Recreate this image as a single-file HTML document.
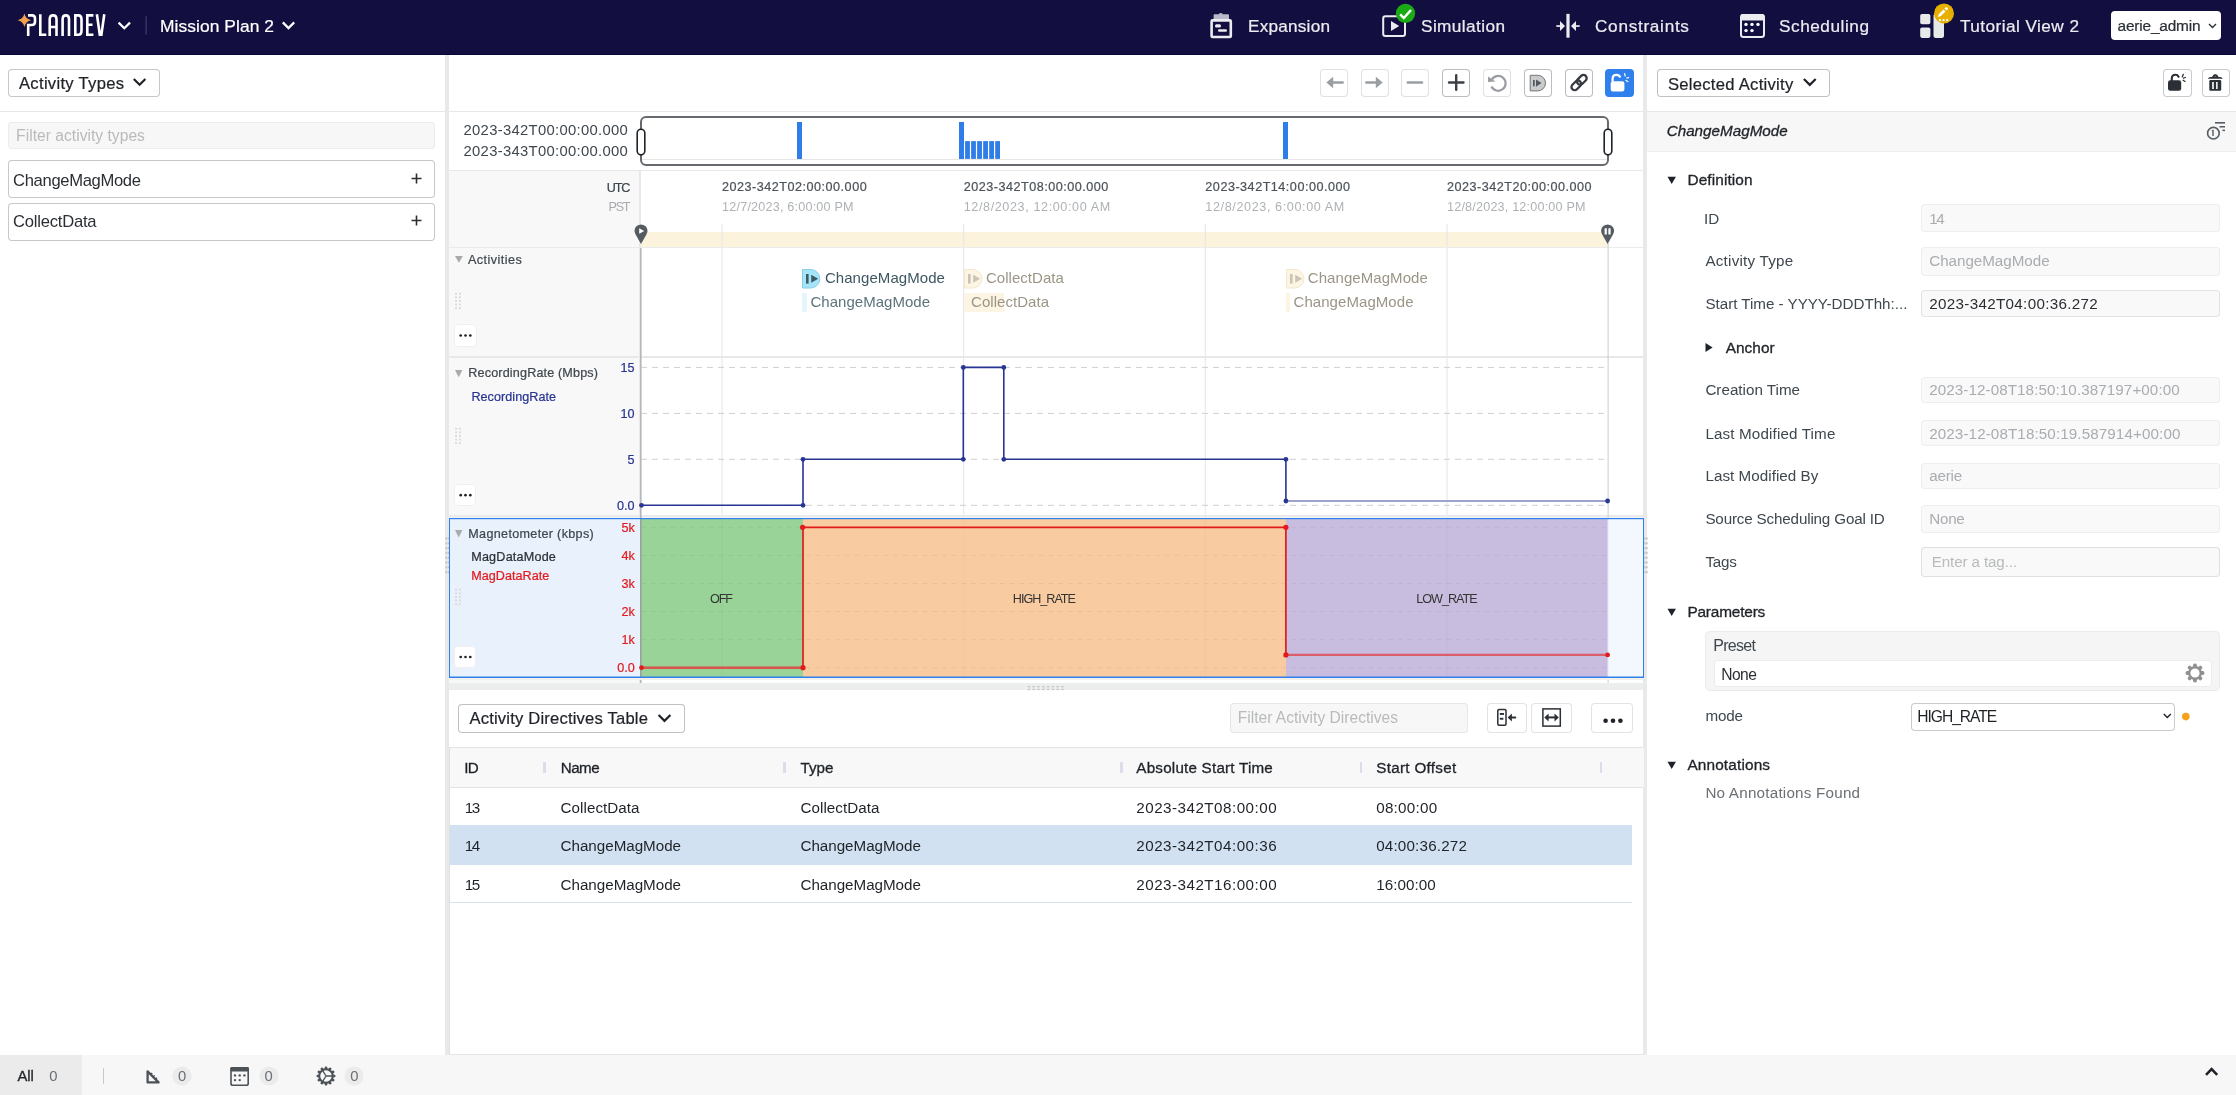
<!DOCTYPE html><html><head><meta charset="utf-8"><style>
html,body{margin:0;padding:0;}
body{width:2236px;height:1095px;overflow:hidden;position:relative;background:#fff;font-family:"Liberation Sans",sans-serif;}
.t{position:absolute;white-space:pre;}
.r{position:absolute;box-sizing:border-box;}
.s{position:absolute;overflow:visible;}
</style></head><body>
<div class="r" style="left:0px;top:0px;width:2236px;height:55px;background:#120f40;"></div>
<div class="r" style="left:0px;top:54px;width:2236px;height:1px;background:#07053a;"></div>
<svg class="s" style="left:0px;top:0px;" width="140" height="55" viewBox="0 0 140 55"><path d="M24.4 13.6 Q25.6 19.2 31.2 20.3 Q25.6 21.4 24.4 27 Q23.2 21.4 17.6 20.3 Q23.2 19.2 24.4 13.6Z" fill="#f2a24e"/><g fill="none" stroke="#fff" stroke-width="2.6" stroke-linecap="butt"><path d="M28.2 36 V25 H32 Q35 25 35 21.5 V18.6 Q35 15.4 32 15.4 H28"/><path d="M40.3 14.2 V34.7 H46.3"/><path d="M49.7 36 V19.5 Q49.7 15.4 53.1 15.4 Q56.5 15.4 56.5 19.5 V36 M49.7 27 H56.5"/><path d="M62.6 36 V19.5 Q62.6 15.4 65.8 15.4 Q69 15.4 69 19.5 V36"/><path d="M75.3 15.4 V34.7 H78.3 Q81.5 34.7 81.5 30.5 V19.6 Q81.5 15.4 78.3 15.4 Z"/><path d="M93.4 15.4 H87.3 V34.7 H93.4 M87.3 24.7 H92.5"/><path d="M96.9 14.2 L99.8 34.7 H101.4 L104.3 14.2"/></g><path d="M118.6 22.6 L124.3 28.3 L130 22.6" fill="none" stroke="#fff" stroke-width="2.2"/><rect x="145.6" y="16.3" width="1" height="18.4" fill="#4a4874"/></svg>
<svg class="s" style="left:280px;top:18px;" width="18" height="16" viewBox="0 0 18 16"><path d="M2.8 4.4 L8.5 10.1 L14.2 4.4" fill="none" stroke="#fff" stroke-width="2.2"/></svg>
<svg class="s" style="left:1205px;top:8px;" width="32" height="36" viewBox="0 0 32 36"><rect x="6.6" y="12.4" width="19.2" height="16.6" rx="1" fill="none" stroke="#ececf0" stroke-width="2.6"/><path d="M8.6 11 V7.2 Q8.6 6.2 9.6 6.2 H13.6 Q15.8 3.6 18 6.2 H23 Q24 6.2 24 7.2 V11 Z" fill="#b9b7c9"/><rect x="10" y="16.3" width="6" height="3.1" rx="1.5" fill="#ececf0"/><rect x="13" y="21.3" width="9" height="2.5" rx="1.2" fill="#ececf0"/></svg>
<svg class="s" style="left:1375px;top:0px;" width="45" height="45" viewBox="0 0 45 45"><rect x="8.2" y="16.3" width="21.8" height="19.6" rx="2.2" fill="none" stroke="#ececf0" stroke-width="2"/><path d="M16 21 L24.2 26 L16 31 Z" fill="#ececf0"/><circle cx="30.5" cy="13.4" r="9.6" fill="#1aaa14"/><path d="M25.2 14.3 L28.8 18 L36 10" fill="none" stroke="#fff" stroke-width="2.5"/></svg>
<svg class="s" style="left:1550px;top:8px;" width="36" height="36" viewBox="0 0 36 36"><rect x="16.4" y="5.9" width="3.2" height="23.8" fill="#ececf0"/><path d="M10 12.9 L15 18 L10 23.1 Z M26 12.9 L21 18 L26 23.1 Z" fill="#ececf0"/><rect x="6.3" y="17.2" width="4" height="1.7" fill="#ececf0"/><rect x="25.7" y="17.2" width="4" height="1.7" fill="#ececf0"/></svg>
<svg class="s" style="left:1735px;top:8px;" width="36" height="36" viewBox="0 0 36 36"><rect x="6" y="6.9" width="23" height="22.2" rx="2.5" fill="none" stroke="#ececf0" stroke-width="2"/><rect x="5.5" y="6" width="24" height="6.4" rx="2" fill="#ececf0"/><g fill="#fff"><circle cx="11" cy="16.4" r="1.7"/><circle cx="17" cy="16.4" r="1.7"/><circle cx="23" cy="16.4" r="1.7"/><circle cx="11" cy="22.6" r="1.7"/><circle cx="17" cy="22.6" r="1.7"/></g></svg>
<svg class="s" style="left:1910px;top:0px;" width="50" height="45" viewBox="0 0 50 45"><rect x="10.2" y="13.9" width="10.2" height="10.3" rx="1.8" fill="#e8eaea"/><rect x="10.2" y="27.4" width="10.2" height="10.5" rx="1.8" fill="#e8eaea"/><rect x="23.5" y="13.9" width="10.5" height="24" rx="1.8" fill="#e8eaea"/><circle cx="34" cy="13.4" r="10" fill="#e5b000"/><path d="M27.8 17.2 L28.9 14.1 L33.5 9.5 L35.5 11.5 L30.9 16.1 Z" fill="#fff"/><path d="M34.4 8.6 L35.6 7.4 Q36.4 6.6 37.2 7.4 L37.6 7.8 Q38.4 8.6 37.6 9.4 L36.4 10.6 Z" fill="#fff"/><g fill="#fff"><circle cx="30" cy="20.1" r="1.2"/><circle cx="33.6" cy="20.1" r="1.2"/><circle cx="37.2" cy="20.1" r="1.2"/></g></svg>
<div class="r" style="left:2111px;top:11px;width:110px;height:29px;background:#ffffff;border-radius:4px;"></div>
<svg class="s" style="left:2205px;top:20px;" width="14" height="12" viewBox="0 0 14 12"><path d="M4 4 L7.5 7.5 L11 4" fill="none" stroke="#2b2f36" stroke-width="1.4"/></svg>
<div class="r" style="left:445px;top:55px;width:4px;height:1000px;background:#e8eaea;"></div>
<div class="r" style="left:1643px;top:55px;width:4px;height:1000px;background:#e8eaea;"></div>
<svg class="s" style="left:0px;top:0px;" width="2236" height="1095" viewBox="0 0 2236 1095"><rect x="445.4" y="537.4" width="1.5" height="2.2" fill="#c2c4c6"/><rect x="447.6" y="537.4" width="1.5" height="2.2" fill="#c2c4c6"/><rect x="1644.2" y="537.4" width="1.5" height="2.2" fill="#c2c4c6"/><rect x="1646.2" y="537.4" width="1.5" height="2.2" fill="#c2c4c6"/><rect x="445.4" y="542.2" width="1.5" height="2.2" fill="#c2c4c6"/><rect x="447.6" y="542.2" width="1.5" height="2.2" fill="#c2c4c6"/><rect x="1644.2" y="542.2" width="1.5" height="2.2" fill="#c2c4c6"/><rect x="1646.2" y="542.2" width="1.5" height="2.2" fill="#c2c4c6"/><rect x="445.4" y="547.0" width="1.5" height="2.2" fill="#c2c4c6"/><rect x="447.6" y="547.0" width="1.5" height="2.2" fill="#c2c4c6"/><rect x="1644.2" y="547.0" width="1.5" height="2.2" fill="#c2c4c6"/><rect x="1646.2" y="547.0" width="1.5" height="2.2" fill="#c2c4c6"/><rect x="445.4" y="551.8" width="1.5" height="2.2" fill="#c2c4c6"/><rect x="447.6" y="551.8" width="1.5" height="2.2" fill="#c2c4c6"/><rect x="1644.2" y="551.8" width="1.5" height="2.2" fill="#c2c4c6"/><rect x="1646.2" y="551.8" width="1.5" height="2.2" fill="#c2c4c6"/><rect x="445.4" y="556.6" width="1.5" height="2.2" fill="#c2c4c6"/><rect x="447.6" y="556.6" width="1.5" height="2.2" fill="#c2c4c6"/><rect x="1644.2" y="556.6" width="1.5" height="2.2" fill="#c2c4c6"/><rect x="1646.2" y="556.6" width="1.5" height="2.2" fill="#c2c4c6"/><rect x="445.4" y="561.4" width="1.5" height="2.2" fill="#c2c4c6"/><rect x="447.6" y="561.4" width="1.5" height="2.2" fill="#c2c4c6"/><rect x="1644.2" y="561.4" width="1.5" height="2.2" fill="#c2c4c6"/><rect x="1646.2" y="561.4" width="1.5" height="2.2" fill="#c2c4c6"/><rect x="445.4" y="566.2" width="1.5" height="2.2" fill="#c2c4c6"/><rect x="447.6" y="566.2" width="1.5" height="2.2" fill="#c2c4c6"/><rect x="1644.2" y="566.2" width="1.5" height="2.2" fill="#c2c4c6"/><rect x="1646.2" y="566.2" width="1.5" height="2.2" fill="#c2c4c6"/><rect x="445.4" y="571.0" width="1.5" height="2.2" fill="#c2c4c6"/><rect x="447.6" y="571.0" width="1.5" height="2.2" fill="#c2c4c6"/><rect x="1644.2" y="571.0" width="1.5" height="2.2" fill="#c2c4c6"/><rect x="1646.2" y="571.0" width="1.5" height="2.2" fill="#c2c4c6"/></svg>
<div class="r" style="left:8px;top:69px;width:152px;height:28px;background:#fff;box-shadow:inset 0 0 0 1px #c5c7c9;border-radius:4px;"></div>
<svg class="s" style="left:130px;top:74px;" width="20" height="16" viewBox="0 0 20 16"><path d="M3.8 5 L9.6 10.8 L15.4 5" fill="none" stroke="#1f2328" stroke-width="2.2"/></svg>
<div class="r" style="left:0px;top:111px;width:445px;height:1px;background:#e6e6e6;"></div>
<div class="r" style="left:8px;top:122px;width:427px;height:27px;background:#f7f7f7;box-shadow:inset 0 0 0 1px #ececec;border-radius:4px;"></div>
<div class="r" style="left:8px;top:160px;width:427px;height:38px;background:#fff;box-shadow:inset 0 0 0 1px #c8c8c8;border-radius:4px;"></div>
<svg class="s" style="left:405px;top:168px;" width="22" height="22" viewBox="0 0 22 22"><path d="M11.5 5.5 V15.5 M6.5 10.5 H16.5" stroke="#2b2f33" stroke-width="1.6"/></svg>
<div class="r" style="left:8px;top:202.5px;width:427px;height:38px;background:#fff;box-shadow:inset 0 0 0 1px #c8c8c8;border-radius:4px;"></div>
<svg class="s" style="left:405px;top:210px;" width="22" height="22" viewBox="0 0 22 22"><path d="M11.5 5.5 V15.5 M6.5 10.5 H16.5" stroke="#2b2f33" stroke-width="1.6"/></svg>
<div class="r" style="left:1320px;top:69px;width:28px;height:28px;background:#fff;box-shadow:inset 0 0 0 1px #dfe1e3;border-radius:4px;"></div>
<div class="r" style="left:1361px;top:69px;width:28px;height:28px;background:#fff;box-shadow:inset 0 0 0 1px #dfe1e3;border-radius:4px;"></div>
<div class="r" style="left:1401px;top:69px;width:28px;height:28px;background:#fff;box-shadow:inset 0 0 0 1px #dfe1e3;border-radius:4px;"></div>
<div class="r" style="left:1442px;top:69px;width:28px;height:28px;background:#fff;box-shadow:inset 0 0 0 1px #b9bdc1;border-radius:4px;"></div>
<div class="r" style="left:1483px;top:69px;width:28px;height:28px;background:#fff;box-shadow:inset 0 0 0 1px #dfe1e3;border-radius:4px;"></div>
<div class="r" style="left:1524px;top:69px;width:28px;height:28px;background:#fff;box-shadow:inset 0 0 0 1px #b9bdc1;border-radius:4px;"></div>
<div class="r" style="left:1565px;top:69px;width:28px;height:28px;background:#fff;box-shadow:inset 0 0 0 1px #b9bdc1;border-radius:4px;"></div>
<div class="r" style="left:1605px;top:69px;width:29px;height:28px;background:#2f80ed;border-radius:4px;"></div>
<svg class="s" style="left:1320px;top:69px;" width="28" height="28" viewBox="0 0 28 28"><path d="M6.3 13.5 L13.2 7.8 V19.2 Z" fill="#9a9ea3"/><path d="M12 13.5 H22.7" stroke="#9a9ea3" stroke-width="2.4" stroke-linecap="round"/></svg>
<svg class="s" style="left:1361px;top:69px;" width="28" height="28" viewBox="0 0 28 28"><path d="M21.7 13.5 L14.8 7.8 V19.2 Z" fill="#9a9ea3"/><path d="M16 13.5 H5.3" stroke="#9a9ea3" stroke-width="2.4" stroke-linecap="round"/></svg>
<svg class="s" style="left:1401px;top:69px;" width="28" height="28" viewBox="0 0 28 28"><path d="M6.8 13.5 H21" stroke="#9a9ea3" stroke-width="2.4" stroke-linecap="round"/></svg>
<svg class="s" style="left:1442px;top:69px;" width="28" height="28" viewBox="0 0 28 28"><path d="M7 13.5 H21.5 M14.2 6.3 V20.8" stroke="#3b4047" stroke-width="2.4" stroke-linecap="round"/></svg>
<svg class="s" style="left:1483px;top:69px;" width="28" height="28" viewBox="0 0 28 28"><path d="M8.6 11 A7.4 7.4 0 1 1 8.5 17.5" fill="none" stroke="#9a9ea3" stroke-width="2.2"/><path d="M5 7.5 L12.5 12.5 L5 13 Z" fill="#9a9ea3"/></svg>
<svg class="s" style="left:1524px;top:69px;" width="28" height="28" viewBox="0 0 28 28"><path d="M6.2 6.3 H13.7 A7.8 7.8 0 0 1 13.7 21.9 H6.2 Z" fill="#cbcbcb" stroke="#70767b" stroke-width="1"/><rect x="9" y="11" width="1.7" height="6.3" fill="#505860"/><path d="M12 10.5 L17.5 14.1 L12 17.7 Z" fill="#505860"/></svg>
<svg class="s" style="left:1565px;top:69px;" width="28" height="28" viewBox="0 0 28 28"><g transform="rotate(-45 14 13.5)" fill="none" stroke="#353b41" stroke-width="2.3"><rect x="4.6" y="10.4" width="11" height="6.4" rx="3.2"/><rect x="12.4" y="10.4" width="11" height="6.4" rx="3.2"/></g></svg>
<svg class="s" style="left:1605px;top:69px;" width="29" height="28" viewBox="0 0 29 28"><rect x="5.7" y="12.2" width="13.7" height="10.3" rx="2.2" fill="#fff"/><path d="M7.6 12.8 V9.8 Q7.6 5.8 11.4 5.8 Q14.6 5.8 15.2 8.6" fill="none" stroke="#fff" stroke-width="2.2"/><g stroke="#fff" stroke-width="1.2" stroke-linecap="round"><path d="M19.6 4.6 L20.2 7"/><path d="M21.6 9 L23.7 8.6"/><path d="M21 11.4 L22.8 12.6"/></g></svg>
<div class="r" style="left:449px;top:111px;width:1194px;height:1px;background:#e8e8e8;"></div>
<svg class="s" style="left:0px;top:0px;" width="2236" height="200" viewBox="0 0 2236 200"><rect x="641" y="117" width="967" height="48" rx="5" fill="#fff" stroke="#666a6e" stroke-width="2"/><rect x="642" y="159" width="965" height="1" fill="#e6e6e6"/><rect x="797" y="122" width="5" height="37" fill="#2f7de8"/><rect x="959" y="122" width="5" height="37" fill="#2f7de8"/><rect x="1283" y="122" width="5" height="37" fill="#2f7de8"/><rect x="965.10" y="141.1" width="4.8" height="17.8" fill="#2f7de8"/><rect x="971.12" y="141.1" width="4.8" height="17.8" fill="#2f7de8"/><rect x="977.14" y="141.1" width="4.8" height="17.8" fill="#2f7de8"/><rect x="983.16" y="141.1" width="4.8" height="17.8" fill="#2f7de8"/><rect x="989.18" y="141.1" width="4.8" height="17.8" fill="#2f7de8"/><rect x="995.20" y="141.1" width="4.8" height="17.8" fill="#2f7de8"/><rect x="637.2" y="129.3" width="7.6" height="25.6" rx="3.8" fill="#fff" stroke="#1f2328" stroke-width="1.6"/><rect x="1604.2" y="129.3" width="7.6" height="25.6" rx="3.8" fill="#fff" stroke="#1f2328" stroke-width="1.6"/></svg>
<div class="r" style="left:449px;top:170px;width:1194px;height:1px;background:#e8e8e8;"></div>
<div class="r" style="left:449px;top:171px;width:190px;height:513px;background:#f8f8f8;"></div>
<svg class="s" style="left:0px;top:0px;" width="2236" height="700" viewBox="0 0 2236 700"><rect x="641" y="232" width="966.6" height="15.6" fill="#fcf3dd"/><rect x="721.5" y="224" width="1" height="453" fill="#e3e5e8"/><rect x="963.2" y="224" width="1" height="453" fill="#e3e5e8"/><rect x="1204.8" y="224" width="1" height="453" fill="#e3e5e8"/><rect x="1446.5" y="224" width="1" height="453" fill="#e3e5e8"/><rect x="449" y="247" width="1194" height="1" fill="#ebebeb"/><rect x="449" y="356" width="1194" height="2" fill="#e8e8e8"/><rect x="449" y="515" width="1194" height="2.5" fill="#ebebeb"/><rect x="639" y="171" width="2" height="513" fill="#e6e8ea"/><rect x="640" y="248" width="1.6" height="436" fill="#b4b8bc"/><rect x="1607.6" y="243" width="1" height="441" fill="#c8ccd0"/></svg>
<svg class="s" style="left:630px;top:220px;" width="22" height="26" viewBox="0 0 22 26"><path d="M11 24 L5.6 14.5 A6.5 6.5 0 1 1 16.4 14.5 Z" fill="#545b61"/><path d="M9.2 8.2 L14.2 11 L9.2 13.8 Z" fill="#fff"/></svg>
<svg class="s" style="left:1597px;top:220px;" width="22" height="26" viewBox="0 0 22 26"><path d="M10.6 24 L5.2 14.5 A6.5 6.5 0 1 1 16 14.5 Z" fill="#545b61"/><rect x="7.6" y="8.3" width="2.2" height="6.2" fill="#fff"/><rect x="11.4" y="8.3" width="2.2" height="6.2" fill="#fff"/></svg>
<div class="r" style="left:449px;top:248px;width:190px;height:108px;background:#f8f8f8;"></div>
<svg class="s" style="left:454.6px;top:256.2px;" width="7.9" height="6.8" viewBox="0 0 7.9 6.8"><path d="M0 0 H7.9 L3.95 6.8 Z" fill="#a8aaad"/></svg>
<svg class="s" style="left:0px;top:0px;" width="2236" height="1095" viewBox="0 0 2236 1095"><rect x="455.1" y="292.8" width="1.9" height="1.9" fill="#dadada"/><rect x="459.0" y="292.8" width="1.9" height="1.9" fill="#dadada"/><rect x="455.1" y="296.4" width="1.9" height="1.9" fill="#dadada"/><rect x="459.0" y="296.4" width="1.9" height="1.9" fill="#dadada"/><rect x="455.1" y="300.0" width="1.9" height="1.9" fill="#dadada"/><rect x="459.0" y="300.0" width="1.9" height="1.9" fill="#dadada"/><rect x="455.1" y="303.6" width="1.9" height="1.9" fill="#dadada"/><rect x="459.0" y="303.6" width="1.9" height="1.9" fill="#dadada"/><rect x="455.1" y="307.2" width="1.9" height="1.9" fill="#dadada"/><rect x="459.0" y="307.2" width="1.9" height="1.9" fill="#dadada"/></svg>
<div class="r" style="left:453.5px;top:324.3px;width:23px;height:23px;background:#fff;box-shadow:inset 0 0 0 1px #efefef;border-radius:5px;"></div>
<svg class="s" style="left:453.5px;top:324.3px;" width="23" height="23" viewBox="0 0 23 23"><circle cx="6.7" cy="11.5" r="1.35" fill="#1f2328"/><circle cx="11.5" cy="11.5" r="1.35" fill="#1f2328"/><circle cx="16.3" cy="11.5" r="1.35" fill="#1f2328"/></svg>
<svg class="s" style="left:802.4px;top:269.2px;" width="20" height="20" viewBox="0 0 20 20"><path d="M0.5 0.5 H9.5 A9.3 9.3 0 0 1 9.5 19 H0.5 Z" fill="#a6e5f8" stroke="#86d0e8" stroke-width="1"/><rect x="4" y="5" width="2.6" height="9.6" fill="#3d5a66"/><path d="M9.2 5.8 L16.2 9.8 L9.2 13.8 Z" fill="#3d5a66"/></svg>
<div class="r" style="left:802.4px;top:293.4px;width:4.8px;height:18.4px;background:#e4f6fc;"></div>
<svg class="s" style="left:963.6px;top:269.2px;" width="20" height="20" viewBox="0 0 20 20"><path d="M0.5 0.5 H9.5 A9.3 9.3 0 0 1 9.5 19 H0.5 Z" fill="#fdf5e3" stroke="#f3e8cd" stroke-width="1"/><rect x="4" y="5" width="2.6" height="9.6" fill="#c9c4b6"/><path d="M9.2 5.8 L16.2 9.8 L9.2 13.8 Z" fill="#c9c4b6"/></svg>
<div class="r" style="left:963.6px;top:293.1px;width:40.2px;height:18.6px;background:#fdf5e3;"></div>
<svg class="s" style="left:1285.5px;top:269.2px;" width="20" height="20" viewBox="0 0 20 20"><path d="M0.5 0.5 H9.5 A9.3 9.3 0 0 1 9.5 19 H0.5 Z" fill="#fdf5e3" stroke="#f3e8cd" stroke-width="1"/><rect x="4" y="5" width="2.6" height="9.6" fill="#c9c4b6"/><path d="M9.2 5.8 L16.2 9.8 L9.2 13.8 Z" fill="#c9c4b6"/></svg>
<div class="r" style="left:1285.5px;top:293.1px;width:4.5px;height:18.6px;background:#fdf5e3;"></div>
<div class="r" style="left:449px;top:358px;width:190px;height:157px;background:#f8f8f8;"></div>
<svg class="s" style="left:455px;top:369.9px;" width="7.4" height="7.3" viewBox="0 0 7.4 7.3"><path d="M0 0 H7.4 L3.7 7.3 Z" fill="#a8aaad"/></svg>
<svg class="s" style="left:0px;top:0px;" width="2236" height="1095" viewBox="0 0 2236 1095"><rect x="455.1" y="427.8" width="1.9" height="1.9" fill="#dadada"/><rect x="459.0" y="427.8" width="1.9" height="1.9" fill="#dadada"/><rect x="455.1" y="431.4" width="1.9" height="1.9" fill="#dadada"/><rect x="459.0" y="431.4" width="1.9" height="1.9" fill="#dadada"/><rect x="455.1" y="435.0" width="1.9" height="1.9" fill="#dadada"/><rect x="459.0" y="435.0" width="1.9" height="1.9" fill="#dadada"/><rect x="455.1" y="438.6" width="1.9" height="1.9" fill="#dadada"/><rect x="459.0" y="438.6" width="1.9" height="1.9" fill="#dadada"/><rect x="455.1" y="442.2" width="1.9" height="1.9" fill="#dadada"/><rect x="459.0" y="442.2" width="1.9" height="1.9" fill="#dadada"/></svg>
<div class="r" style="left:453.5px;top:483.5px;width:22.5px;height:22.5px;background:#fff;box-shadow:inset 0 0 0 1px #efefef;border-radius:5px;"></div>
<svg class="s" style="left:453.5px;top:483.5px;" width="22.5" height="22.5" viewBox="0 0 22.5 22.5"><circle cx="6.7" cy="11.2" r="1.35" fill="#1f2328"/><circle cx="11.5" cy="11.2" r="1.35" fill="#1f2328"/><circle cx="16.3" cy="11.2" r="1.35" fill="#1f2328"/></svg>
<svg class="s" style="left:0px;top:0px;" width="2236" height="700" viewBox="0 0 2236 700"><line x1="641" y1="367.4" x2="1607.6" y2="367.4" stroke="#cfcfcf" stroke-width="1" stroke-dasharray="6 5"/><line x1="641" y1="413.4" x2="1607.6" y2="413.4" stroke="#cfcfcf" stroke-width="1" stroke-dasharray="6 5"/><line x1="641" y1="459.3" x2="1607.6" y2="459.3" stroke="#cfcfcf" stroke-width="1" stroke-dasharray="6 5"/><line x1="641" y1="505.3" x2="1607.6" y2="505.3" stroke="#cfcfcf" stroke-width="1" stroke-dasharray="6 5"/><path d="M641.0 505.3 L803.0 505.3 L803.0 459.3 L963.3 459.3 L963.3 367.4 L1003.8 367.4 L1003.8 459.3 L1285.9 459.3" fill="none" stroke="#283593" stroke-width="1.6"/><path d="M1285.9 459.3 L1285.9 501" fill="none" stroke="#283593" stroke-width="1.6"/><path d="M1285.9 501 L1607.6 501" fill="none" stroke="#9ea3cc" stroke-width="2"/><circle cx="803.0" cy="505.3" r="2.4" fill="#283593"/><circle cx="803.0" cy="459.3" r="2.4" fill="#283593"/><circle cx="963.3" cy="459.3" r="2.4" fill="#283593"/><circle cx="963.3" cy="367.4" r="2.4" fill="#283593"/><circle cx="1003.8" cy="367.4" r="2.4" fill="#283593"/><circle cx="1003.8" cy="459.3" r="2.4" fill="#283593"/><circle cx="1285.9" cy="459.3" r="2.4" fill="#283593"/><circle cx="1285.9" cy="501.0" r="2.4" fill="#283593"/><circle cx="641.5" cy="505.3" r="2.4" fill="#283593"/><circle cx="1607.6" cy="501" r="2.4" fill="#283593"/></svg>
<div class="r" style="left:449px;top:518px;width:1194.5px;height:160px;background:#e9f1fc;box-shadow:inset 0 0 0 1px #2f80ed;"></div>
<div class="r" style="left:1608.6px;top:519px;width:34px;height:158px;background:#f3f7fe;"></div>
<svg class="s" style="left:0px;top:0px;" width="2236" height="700" viewBox="0 0 2236 700"><rect x="641" y="519" width="162" height="158" fill="#99d398"/><rect x="803" y="519" width="483" height="158" fill="#f9cba0"/><rect x="1286" y="519" width="321.6" height="158" fill="#c8bddf"/><line x1="641" y1="667.7" x2="1607.6" y2="667.7" stroke="rgba(0,0,0,0.05)" stroke-width="1" stroke-dasharray="5 4.7"/><line x1="641" y1="639.6" x2="1607.6" y2="639.6" stroke="rgba(0,0,0,0.05)" stroke-width="1" stroke-dasharray="5 4.7"/><line x1="641" y1="611.5" x2="1607.6" y2="611.5" stroke="rgba(0,0,0,0.05)" stroke-width="1" stroke-dasharray="5 4.7"/><line x1="641" y1="583.5" x2="1607.6" y2="583.5" stroke="rgba(0,0,0,0.05)" stroke-width="1" stroke-dasharray="5 4.7"/><line x1="641" y1="555.4" x2="1607.6" y2="555.4" stroke="rgba(0,0,0,0.05)" stroke-width="1" stroke-dasharray="5 4.7"/><line x1="641" y1="527.3" x2="1607.6" y2="527.3" stroke="rgba(0,0,0,0.05)" stroke-width="1" stroke-dasharray="5 4.7"/><rect x="721.5" y="519" width="1" height="158" fill="rgba(0,0,0,0.025)"/><rect x="963.2" y="519" width="1" height="158" fill="rgba(0,0,0,0.025)"/><rect x="1204.8" y="519" width="1" height="158" fill="rgba(0,0,0,0.025)"/><rect x="1446.5" y="519" width="1" height="158" fill="rgba(0,0,0,0.025)"/><rect x="640" y="519" width="1.6" height="158" fill="#9aa0a4"/><path d="M641 667.7 L803 667.7 L803 527.3 L1285.9 527.3 L1285.9 654.9" fill="none" stroke="#e31a1c" stroke-width="1.7"/><path d="M1285.9 654.9 L1607.6 654.9" fill="none" stroke="#dc5d6c" stroke-width="2.2"/><path d="M641 667.7 L803 667.7" fill="none" stroke="#d9534f" stroke-width="2"/><circle cx="803.0" cy="667.7" r="2.6" fill="#e31a1c"/><circle cx="802.6" cy="527.3" r="2.6" fill="#e31a1c"/><circle cx="1285.9" cy="527.3" r="2.6" fill="#e31a1c"/><circle cx="1285.9" cy="654.9" r="2.6" fill="#e31a1c"/><circle cx="641.5" cy="667.7" r="2.4" fill="#e31a1c"/><circle cx="1607.6" cy="654.9" r="2.4" fill="#e31a1c"/><rect x="449" y="518" width="1194.5" height="1.2" fill="#2f80ed"/><rect x="449" y="676.5" width="1194.5" height="1.2" fill="#2f80ed"/></svg>
<svg class="s" style="left:454.8px;top:530px;" width="7.4" height="7.5" viewBox="0 0 7.4 7.5"><path d="M0 0 H7.4 L3.7 7.5 Z" fill="#a8aaad"/></svg>
<svg class="s" style="left:0px;top:0px;" width="2236" height="1095" viewBox="0 0 2236 1095"><rect x="455.1" y="588.7" width="1.9" height="1.9" fill="#dadada"/><rect x="459.0" y="588.7" width="1.9" height="1.9" fill="#dadada"/><rect x="455.1" y="592.3" width="1.9" height="1.9" fill="#dadada"/><rect x="459.0" y="592.3" width="1.9" height="1.9" fill="#dadada"/><rect x="455.1" y="595.9" width="1.9" height="1.9" fill="#dadada"/><rect x="459.0" y="595.9" width="1.9" height="1.9" fill="#dadada"/><rect x="455.1" y="599.5" width="1.9" height="1.9" fill="#dadada"/><rect x="459.0" y="599.5" width="1.9" height="1.9" fill="#dadada"/><rect x="455.1" y="603.1" width="1.9" height="1.9" fill="#dadada"/><rect x="459.0" y="603.1" width="1.9" height="1.9" fill="#dadada"/></svg>
<div class="r" style="left:454px;top:646px;width:22.2px;height:22px;background:#fff;box-shadow:inset 0 0 0 1px #efefef;border-radius:5px;"></div>
<svg class="s" style="left:454px;top:646px;" width="22.2" height="22" viewBox="0 0 22.2 22"><circle cx="6.7" cy="11.0" r="1.35" fill="#1f2328"/><circle cx="11.5" cy="11.0" r="1.35" fill="#1f2328"/><circle cx="16.3" cy="11.0" r="1.35" fill="#1f2328"/></svg>
<div class="r" style="left:449px;top:678.2px;width:1194px;height:1.6px;background:#f2f1ec;"></div>
<div class="r" style="left:449px;top:683px;width:1194px;height:7px;background:#eceeee;"></div>
<svg class="s" style="left:0px;top:0px;" width="2236" height="1095" viewBox="0 0 2236 1095"><rect x="1027.6" y="686" width="2.6" height="1.3" fill="#c4c6c8"/><rect x="1027.6" y="688.8" width="2.6" height="1.3" fill="#c4c6c8"/><rect x="1032.4" y="686" width="2.6" height="1.3" fill="#c4c6c8"/><rect x="1032.4" y="688.8" width="2.6" height="1.3" fill="#c4c6c8"/><rect x="1037.2" y="686" width="2.6" height="1.3" fill="#c4c6c8"/><rect x="1037.2" y="688.8" width="2.6" height="1.3" fill="#c4c6c8"/><rect x="1042.0" y="686" width="2.6" height="1.3" fill="#c4c6c8"/><rect x="1042.0" y="688.8" width="2.6" height="1.3" fill="#c4c6c8"/><rect x="1046.8" y="686" width="2.6" height="1.3" fill="#c4c6c8"/><rect x="1046.8" y="688.8" width="2.6" height="1.3" fill="#c4c6c8"/><rect x="1051.6" y="686" width="2.6" height="1.3" fill="#c4c6c8"/><rect x="1051.6" y="688.8" width="2.6" height="1.3" fill="#c4c6c8"/><rect x="1056.4" y="686" width="2.6" height="1.3" fill="#c4c6c8"/><rect x="1056.4" y="688.8" width="2.6" height="1.3" fill="#c4c6c8"/><rect x="1061.2" y="686" width="2.6" height="1.3" fill="#c4c6c8"/><rect x="1061.2" y="688.8" width="2.6" height="1.3" fill="#c4c6c8"/></svg>
<div class="r" style="left:458.4px;top:704.4px;width:226.5px;height:28.3px;background:#fff;box-shadow:inset 0 0 0 1px #bfc1c3;border-radius:4px;"></div>
<svg class="s" style="left:650px;top:705px;" width="26" height="24" viewBox="0 0 26 24"><path d="M8.6 10 L14.5 15.9 L20.4 10" fill="none" stroke="#1f2328" stroke-width="2.2"/></svg>
<div class="r" style="left:1230px;top:703px;width:237.5px;height:29.6px;background:#f7f7f7;box-shadow:inset 0 0 0 1px #e6e6e6;border-radius:4px;"></div>
<div class="r" style="left:1487px;top:703px;width:39.5px;height:29.6px;background:#fff;box-shadow:inset 0 0 0 1px #e3e3e3;border-radius:4px;"></div>
<div class="r" style="left:1531.3px;top:703px;width:40.3px;height:29.6px;background:#fff;box-shadow:inset 0 0 0 1px #e3e3e3;border-radius:4px;"></div>
<div class="r" style="left:1591.4px;top:703px;width:42px;height:29.6px;background:#fff;box-shadow:inset 0 0 0 1px #e3e3e3;border-radius:4px;"></div>
<svg class="s" style="left:0px;top:0px;" width="2236" height="1095" viewBox="0 0 2236 1095"><rect x="1497.8" y="709.6" width="8.2" height="15.6" rx="1.2" fill="none" stroke="#2b3036" stroke-width="1.5"/><rect x="1499.8" y="713" width="4.2" height="1.9" fill="#2b3036"/><rect x="1499.8" y="717.8" width="3.6" height="1.9" fill="#2b3036"/><path d="M1507.6 717.4 L1511.9 713.4 V721.4 Z" fill="#2b3036"/><rect x="1511" y="716.5" width="5.3" height="1.9" rx="0.9" fill="#2b3036"/><rect x="1542.9" y="708.9" width="17.4" height="17.2" fill="none" stroke="#2b3036" stroke-width="1.5"/><path d="M1544.3 717.4 L1548.6 713.4 V721.4 Z M1558.8 717.4 L1554.5 713.4 V721.4 Z" fill="#2b3036"/><rect x="1548" y="716.4" width="7" height="2" fill="#2b3036"/><circle cx="1605.6" cy="720.7" r="2.3" fill="#1f2328"/><circle cx="1613" cy="720.7" r="2.3" fill="#1f2328"/><circle cx="1620.4" cy="720.7" r="2.3" fill="#1f2328"/></svg>
<div class="r" style="left:449px;top:746.5px;width:1194px;height:1.2px;background:#e3e3e3;"></div>
<div class="r" style="left:449.5px;top:747.5px;width:1194px;height:39.5px;background:#f8f8f8;"></div>
<div class="r" style="left:449px;top:786.6px;width:1194px;height:1.2px;background:#e3e3e3;"></div>
<div class="r" style="left:543.3px;top:762px;width:2.9px;height:11px;background:#d9deea;"></div>
<div class="r" style="left:783.3px;top:762px;width:2.9px;height:11px;background:#d9deea;"></div>
<div class="r" style="left:1119.7px;top:762px;width:2.9px;height:11px;background:#d9deea;"></div>
<div class="r" style="left:1359.5px;top:762px;width:2.9px;height:11px;background:#d9deea;"></div>
<div class="r" style="left:1599.5px;top:762px;width:2.9px;height:11px;background:#d9deea;"></div>
<div class="r" style="left:449.5px;top:825.3px;width:1182.5px;height:39.4px;background:#d2e1f1;"></div>
<div class="r" style="left:449.5px;top:902px;width:1182.5px;height:1.2px;background:#dde3ee;"></div>
<div class="r" style="left:449px;top:747px;width:1px;height:308px;background:#e0e0e0;"></div>
<div class="r" style="left:449px;top:1054px;width:1194px;height:1px;background:#e6e6e6;"></div>
<div class="r" style="left:1657.3px;top:69px;width:172.5px;height:27.5px;background:#fff;box-shadow:inset 0 0 0 1px #bfc1c3;border-radius:4px;"></div>
<svg class="s" style="left:1800px;top:73px;" width="20" height="18" viewBox="0 0 20 18"><path d="M3.9 6 L9.8 11.9 L15.7 6" fill="none" stroke="#1f2328" stroke-width="2.2"/></svg>
<div class="r" style="left:2163.2px;top:69px;width:28.5px;height:27.5px;background:#fff;box-shadow:inset 0 0 0 1px #c8cacc;border-radius:4px;"></div>
<div class="r" style="left:2202.4px;top:69px;width:27.3px;height:27.5px;background:#fff;box-shadow:inset 0 0 0 1px #c8cacc;border-radius:4px;"></div>
<svg class="s" style="left:2163.2px;top:69px;" width="29" height="28" viewBox="0 0 29 28"><rect x="5" y="11.3" width="13.2" height="10.5" rx="2.3" fill="#2b3036"/><path d="M8.8 12 V9.6 Q8.8 5.8 12.4 5.8 Q14.6 5.8 15.6 7.7" fill="none" stroke="#2b3036" stroke-width="2.1" stroke-linecap="round"/><g stroke="#2b3036" stroke-width="1.3" stroke-linecap="round"><path d="M20.3 5.3 L19.3 7.8"/><path d="M20.4 9.1 L22.4 8.5"/><path d="M20.1 11.3 L22 12.5"/></g></svg>
<svg class="s" style="left:2202.4px;top:69px;" width="28" height="28" viewBox="0 0 28 28"><rect x="7.3" y="11.1" width="11.9" height="10.7" rx="1.2" fill="#2b3036"/><path d="M5.9 9.8 Q6.4 8.2 8.6 8 H10 Q11.4 5 13.3 5 Q15.2 5 16.6 8 H18 Q20.2 8.2 20.7 9.8 Z" fill="#2b3036"/><path d="M12.2 7.6 L13.3 6.4 L14.4 7.6 Z" fill="#9aa0a4"/><rect x="10.2" y="13" width="1.6" height="7" fill="#fff"/><rect x="14.1" y="13" width="1.5" height="7" fill="#fff"/></svg>
<div class="r" style="left:1647px;top:111px;width:589px;height:1px;background:#e6e6e6;"></div>
<div class="r" style="left:1647px;top:112px;width:589px;height:39.5px;background:#f7f7f7;"></div>
<div class="r" style="left:1647px;top:151px;width:589px;height:1px;background:#eeeeee;"></div>
<svg class="s" style="left:2203px;top:118px;" width="26" height="26" viewBox="0 0 26 26"><circle cx="10.4" cy="15.2" r="5.8" fill="none" stroke="#555c63" stroke-width="1.6"/><path d="M10 12.6 V18" stroke="#555c63" stroke-width="1.4"/><path d="M9 13 L10.4 12" stroke="#555c63" stroke-width="1.2"/><rect x="12" y="4" width="10" height="1.6" fill="#555c63"/><rect x="16.5" y="8" width="5.5" height="1.5" fill="#555c63"/><rect x="19.5" y="11.6" width="2.5" height="1.5" fill="#555c63"/></svg>
<svg class="s" style="left:1666px;top:176.4px;" width="12" height="10" viewBox="0 0 12 10"><path d="M1.5 0.8 H9.9 L5.7 7.9 Z" fill="#1f2328"/></svg>
<div class="r" style="left:1921.2px;top:204.3px;width:299.3px;height:28px;background:#f9f9f9;box-shadow:inset 0 0 0 1px #eeeeee;border-radius:4px;"></div>
<div class="r" style="left:1921.2px;top:247.4px;width:299.3px;height:28.3px;background:#f9f9f9;box-shadow:inset 0 0 0 1px #eeeeee;border-radius:4px;"></div>
<div class="r" style="left:1921.2px;top:290.3px;width:299.3px;height:27.2px;background:#f9f9f9;box-shadow:inset 0 0 0 1px #e3e3e3;border-radius:4px;"></div>
<svg class="s" style="left:1704px;top:342px;" width="12" height="11" viewBox="0 0 12 11"><path d="M1.5 1 V9.9 L8.6 5.45 Z" fill="#1f2328"/></svg>
<div class="r" style="left:1921.2px;top:376.6px;width:299.3px;height:26.7px;background:#f9f9f9;box-shadow:inset 0 0 0 1px #eeeeee;border-radius:4px;"></div>
<div class="r" style="left:1921.2px;top:419.8px;width:299.3px;height:26.7px;background:#f9f9f9;box-shadow:inset 0 0 0 1px #eeeeee;border-radius:4px;"></div>
<div class="r" style="left:1921.2px;top:462.5px;width:299.3px;height:26.9px;background:#f9f9f9;box-shadow:inset 0 0 0 1px #eeeeee;border-radius:4px;"></div>
<div class="r" style="left:1921.2px;top:504.6px;width:299.3px;height:28px;background:#f9f9f9;box-shadow:inset 0 0 0 1px #eeeeee;border-radius:4px;"></div>
<div class="r" style="left:1921.2px;top:547.2px;width:299.3px;height:30.1px;background:#f9f9f9;box-shadow:inset 0 0 0 1px #e0e0e0;border-radius:4px;"></div>
<svg class="s" style="left:1666px;top:608.2px;" width="12" height="10" viewBox="0 0 12 10"><path d="M1.5 0.8 H9.9 L5.7 7.9 Z" fill="#1f2328"/></svg>
<div class="r" style="left:1705.3px;top:631.3px;width:515.2px;height:60px;background:#f5f5f5;box-shadow:inset 0 0 0 1px #ebebeb;border-radius:5px;"></div>
<div class="r" style="left:1713.8px;top:659.8px;width:498.7px;height:27.5px;background:#fff;box-shadow:inset 0 0 0 1px #ececec;border-radius:4px;"></div>
<svg class="s" style="left:2183.6px;top:662.4px;" width="22" height="22" viewBox="0 0 22 22"><g transform="translate(11,11)" fill="#8e9091"><rect x="-1.9" y="-9.4" width="3.8" height="5" rx="1.6" transform="rotate(0)"/><rect x="-1.9" y="-9.4" width="3.8" height="5" rx="1.6" transform="rotate(45)"/><rect x="-1.9" y="-9.4" width="3.8" height="5" rx="1.6" transform="rotate(90)"/><rect x="-1.9" y="-9.4" width="3.8" height="5" rx="1.6" transform="rotate(135)"/><rect x="-1.9" y="-9.4" width="3.8" height="5" rx="1.6" transform="rotate(180)"/><rect x="-1.9" y="-9.4" width="3.8" height="5" rx="1.6" transform="rotate(225)"/><rect x="-1.9" y="-9.4" width="3.8" height="5" rx="1.6" transform="rotate(270)"/><rect x="-1.9" y="-9.4" width="3.8" height="5" rx="1.6" transform="rotate(315)"/><circle r="6.9" fill="#8e9091"/><circle r="4.6" fill="#fff"/></g></svg>
<div class="r" style="left:1911.3px;top:702.5px;width:264px;height:28px;background:#fff;box-shadow:inset 0 0 0 1px #c8cacc;border-radius:4px;"></div>
<svg class="s" style="left:2160px;top:710px;" width="14" height="12" viewBox="0 0 14 12"><path d="M3.8 4 L7.3 7.5 L10.8 4" fill="none" stroke="#1f2328" stroke-width="1.4"/></svg>
<svg class="s" style="left:2180px;top:711px;" width="12" height="12" viewBox="0 0 12 12"><circle cx="5.8" cy="5.6" r="3.8" fill="#f7a01b"/></svg>
<svg class="s" style="left:1666px;top:760.9px;" width="12" height="10" viewBox="0 0 12 10"><path d="M1.5 0.8 H9.9 L5.7 7.9 Z" fill="#1f2328"/></svg>
<div class="r" style="left:0px;top:1055px;width:2236px;height:40px;background:#f7f7f7;"></div>
<div class="r" style="left:0px;top:1055px;width:82px;height:40px;background:#ebebeb;"></div>
<div class="r" style="left:103px;top:1068px;width:1px;height:16px;background:#c9c9c9;"></div>
<svg class="s" style="left:0px;top:0px;" width="2236" height="1095" viewBox="0 0 2236 1095"><path d="M147.6 1071.4 V1082.4 H158.6 Z" fill="none" stroke="#4b5359" stroke-width="2.3" stroke-linejoin="round"/><g stroke="#4b5359" stroke-width="1.3"><path d="M151 1074.2 L152.2 1073"/><path d="M153.4 1076.6 L154.6 1075.4"/><path d="M155.8 1079 L157 1077.8"/></g></svg>
<svg class="s" style="left:172.1px;top:1066.3px;" width="20" height="20" viewBox="0 0 20 20"><circle cx="10" cy="10" r="9.6" fill="#ebebeb"/></svg>
<svg class="s" style="left:258.5px;top:1066.3px;" width="20" height="20" viewBox="0 0 20 20"><circle cx="10" cy="10" r="9.6" fill="#ebebeb"/></svg>
<svg class="s" style="left:344.4px;top:1066.3px;" width="20" height="20" viewBox="0 0 20 20"><circle cx="10" cy="10" r="9.6" fill="#ebebeb"/></svg>
<svg class="s" style="left:0px;top:0px;" width="2236" height="1095" viewBox="0 0 2236 1095"><rect x="231" y="1067.8" width="17.2" height="17.4" rx="1.8" fill="none" stroke="#4b5359" stroke-width="1.6"/><rect x="230.3" y="1067" width="18.6" height="4.4" rx="1.4" fill="#4b5359"/><g fill="#4b5359"><circle cx="235" cy="1075.4" r="1.2"/><circle cx="239.7" cy="1075.4" r="1.2"/><circle cx="244.4" cy="1075.4" r="1.2"/><circle cx="235" cy="1080.1" r="1.2"/><circle cx="239.7" cy="1080.1" r="1.2"/></g></svg>
<svg class="s" style="left:311.5px;top:1062.4px;" width="28" height="28" viewBox="0 0 28 28"><g transform="translate(14,14)"><path d="M-1.7 -6.5 L-1.1 -9.2 Q0 -9.9 1.1 -9.2 L1.7 -6.5 Z" fill="#4b5359" transform="rotate(0)"/><path d="M-1.7 -6.5 L-1.1 -9.2 Q0 -9.9 1.1 -9.2 L1.7 -6.5 Z" fill="#4b5359" transform="rotate(30)"/><path d="M-1.7 -6.5 L-1.1 -9.2 Q0 -9.9 1.1 -9.2 L1.7 -6.5 Z" fill="#4b5359" transform="rotate(60)"/><path d="M-1.7 -6.5 L-1.1 -9.2 Q0 -9.9 1.1 -9.2 L1.7 -6.5 Z" fill="#4b5359" transform="rotate(90)"/><path d="M-1.7 -6.5 L-1.1 -9.2 Q0 -9.9 1.1 -9.2 L1.7 -6.5 Z" fill="#4b5359" transform="rotate(120)"/><path d="M-1.7 -6.5 L-1.1 -9.2 Q0 -9.9 1.1 -9.2 L1.7 -6.5 Z" fill="#4b5359" transform="rotate(150)"/><path d="M-1.7 -6.5 L-1.1 -9.2 Q0 -9.9 1.1 -9.2 L1.7 -6.5 Z" fill="#4b5359" transform="rotate(180)"/><path d="M-1.7 -6.5 L-1.1 -9.2 Q0 -9.9 1.1 -9.2 L1.7 -6.5 Z" fill="#4b5359" transform="rotate(210)"/><path d="M-1.7 -6.5 L-1.1 -9.2 Q0 -9.9 1.1 -9.2 L1.7 -6.5 Z" fill="#4b5359" transform="rotate(240)"/><path d="M-1.7 -6.5 L-1.1 -9.2 Q0 -9.9 1.1 -9.2 L1.7 -6.5 Z" fill="#4b5359" transform="rotate(270)"/><path d="M-1.7 -6.5 L-1.1 -9.2 Q0 -9.9 1.1 -9.2 L1.7 -6.5 Z" fill="#4b5359" transform="rotate(300)"/><path d="M-1.7 -6.5 L-1.1 -9.2 Q0 -9.9 1.1 -9.2 L1.7 -6.5 Z" fill="#4b5359" transform="rotate(330)"/><circle r="6.7" fill="none" stroke="#4b5359" stroke-width="1.9"/><path d="M0 0 H6.2 M0 0 L-3.3 -5.4 M0 0 L-3.3 5.4" stroke="#4b5359" stroke-width="1.3"/></g></svg>
<svg class="s" style="left:2200px;top:1063px;" width="24" height="20" viewBox="0 0 24 20"><path d="M6 11.8 L11.6 6.2 L17.2 11.8" fill="none" stroke="#1f2328" stroke-width="2.6"/></svg>
<svg class="s" style="left:0;top:0;will-change:transform" width="2236" height="1095" font-family="Liberation Sans, sans-serif"><text x="160.00" y="32" font-size="17.4" fill="#ffffff" textLength="113.97" lengthAdjust="spacing" stroke="#ffffff" stroke-width="0.22">Mission Plan 2</text><text x="1248.00" y="32" font-size="17.2" fill="#ebebf0" textLength="82.00" lengthAdjust="spacing" stroke="#ebebf0" stroke-width="0.22">Expansion</text><text x="1421.00" y="32" font-size="17.2" fill="#ebebf0" textLength="83.99" lengthAdjust="spacing" stroke="#ebebf0" stroke-width="0.22">Simulation</text><text x="1595.00" y="32" font-size="17.2" fill="#ebebf0" textLength="93.96" lengthAdjust="spacing" stroke="#ebebf0" stroke-width="0.22">Constraints</text><text x="1779.00" y="32" font-size="17.2" fill="#ebebf0" textLength="89.97" lengthAdjust="spacing" stroke="#ebebf0" stroke-width="0.22">Scheduling</text><text x="1960.00" y="32" font-size="17.2" fill="#ebebf0" textLength="118.98" lengthAdjust="spacing" stroke="#ebebf0" stroke-width="0.22">Tutorial View 2</text><text x="2117.60" y="31" font-size="15.4" fill="#2b2f36" textLength="82.98" lengthAdjust="spacing" stroke="#2b2f36" stroke-width="0.22">aerie_admin</text><text x="19.00" y="89" font-size="16.6" fill="#1f2328" textLength="105.00" lengthAdjust="spacing" stroke="#1f2328" stroke-width="0.22">Activity Types</text><text x="16.10" y="141" font-size="15.6" fill="#b8babc" textLength="128.79" lengthAdjust="spacing">Filter activity types</text><text x="13.10" y="186" font-size="16.6" fill="#2b2f33" textLength="127.80" lengthAdjust="spacing">ChangeMagMode</text><text x="13.10" y="227" font-size="16.6" fill="#2b2f33" textLength="83.40" lengthAdjust="spacing">CollectData</text><text x="463.50" y="135" font-size="14.8" fill="#3f474e" textLength="164.32" lengthAdjust="spacing">2023-342T00:00:00.000</text><text x="463.50" y="156" font-size="14.8" fill="#3f474e" textLength="164.32" lengthAdjust="spacing">2023-343T00:00:00.000</text><text x="606.70" y="192" font-size="12.6" fill="#3f474e" textLength="23.70" lengthAdjust="spacing" stroke="#3f474e" stroke-width="0.22">UTC</text><text x="608.60" y="211" font-size="12.6" fill="#a8aaad" textLength="21.80" lengthAdjust="spacing">PST</text><text x="722.05" y="191" font-size="12.6" fill="#4b5359" textLength="144.61" lengthAdjust="spacing" stroke="#4b5359" stroke-width="0.22">2023-342T02:00:00.000</text><text x="722.05" y="211" font-size="12.6" fill="#aeb2b5" textLength="131.49" lengthAdjust="spacing">12/7/2023, 6:00:00 PM</text><text x="963.70" y="191" font-size="12.6" fill="#4b5359" textLength="144.61" lengthAdjust="spacing" stroke="#4b5359" stroke-width="0.22">2023-342T08:00:00.000</text><text x="963.70" y="211" font-size="12.6" fill="#aeb2b5" textLength="146.50" lengthAdjust="spacing">12/8/2023, 12:00:00 AM</text><text x="1205.35" y="191" font-size="12.6" fill="#4b5359" textLength="144.61" lengthAdjust="spacing" stroke="#4b5359" stroke-width="0.22">2023-342T14:00:00.000</text><text x="1205.35" y="211" font-size="12.6" fill="#aeb2b5" textLength="138.98" lengthAdjust="spacing">12/8/2023, 6:00:00 AM</text><text x="1447.00" y="191" font-size="12.6" fill="#4b5359" textLength="144.61" lengthAdjust="spacing" stroke="#4b5359" stroke-width="0.22">2023-342T20:00:00.000</text><text x="1447.00" y="211" font-size="12.6" fill="#aeb2b5" textLength="138.50" lengthAdjust="spacing">12/8/2023, 12:00:00 PM</text><text x="468.00" y="264" font-size="12.6" fill="#3f474e" textLength="53.70" lengthAdjust="spacing" stroke="#3f474e" stroke-width="0.22">Activities</text><text x="824.90" y="283" font-size="15" fill="#3e5661" textLength="120.00" lengthAdjust="spacing">ChangeMagMode</text><text x="810.50" y="307" font-size="15" fill="#5d737c" textLength="119.50" lengthAdjust="spacing">ChangeMagMode</text><text x="985.90" y="283" font-size="15" fill="#9a9585" textLength="77.91" lengthAdjust="spacing">CollectData</text><text x="971.10" y="307" font-size="15" fill="#9a9585" textLength="77.91" lengthAdjust="spacing">CollectData</text><text x="1307.80" y="283" font-size="15" fill="#9a9585" textLength="120.00" lengthAdjust="spacing">ChangeMagMode</text><text x="1293.50" y="307" font-size="15" fill="#9a9585" textLength="120.00" lengthAdjust="spacing">ChangeMagMode</text><text x="468.30" y="377" font-size="12.6" fill="#3f474e" textLength="129.70" lengthAdjust="spacing" stroke="#3f474e" stroke-width="0.22">RecordingRate (Mbps)</text><text x="471.40" y="401" font-size="12.6" fill="#283593" textLength="84.61" lengthAdjust="spacing" stroke="#283593" stroke-width="0.22">RecordingRate</text><text x="620.61" y="372" font-size="12.6" fill="#283593" stroke="#283593" stroke-width="0.22">15</text><text x="620.61" y="418" font-size="12.6" fill="#283593" stroke="#283593" stroke-width="0.22">10</text><text x="627.61" y="464" font-size="12.6" fill="#283593" stroke="#283593" stroke-width="0.22">5</text><text x="617.09" y="510" font-size="12.6" fill="#283593" stroke="#283593" stroke-width="0.22">0.0</text><text x="710.00" y="603" font-size="12.6" fill="#333333" textLength="22.99" lengthAdjust="spacing">OFF</text><text x="1012.85" y="603" font-size="12.6" fill="#333333" textLength="63.09" lengthAdjust="spacing">HIGH_RATE</text><text x="1416.20" y="603" font-size="12.6" fill="#333333" textLength="61.42" lengthAdjust="spacing">LOW_RATE</text><text x="468.30" y="538" font-size="12.6" fill="#3f474e" textLength="125.39" lengthAdjust="spacing" stroke="#3f474e" stroke-width="0.22">Magnetometer (kbps)</text><text x="471.20" y="561" font-size="12.6" fill="#2b2f33" textLength="84.69" lengthAdjust="spacing" stroke="#2b2f33" stroke-width="0.22">MagDataMode</text><text x="471.20" y="580" font-size="12.6" fill="#e31a1c" textLength="78.00" lengthAdjust="spacing" stroke="#e31a1c" stroke-width="0.22">MagDataRate</text><text x="621.44" y="532" font-size="12.6" fill="#e31a1c" stroke="#e31a1c" stroke-width="0.22">5k</text><text x="621.44" y="560" font-size="12.6" fill="#e31a1c" stroke="#e31a1c" stroke-width="0.22">4k</text><text x="621.44" y="588" font-size="12.6" fill="#e31a1c" stroke="#e31a1c" stroke-width="0.22">3k</text><text x="621.44" y="616" font-size="12.6" fill="#e31a1c" stroke="#e31a1c" stroke-width="0.22">2k</text><text x="621.44" y="644" font-size="12.6" fill="#e31a1c" stroke="#e31a1c" stroke-width="0.22">1k</text><text x="617.29" y="672" font-size="12.6" fill="#e31a1c" stroke="#e31a1c" stroke-width="0.22">0.0</text><text x="469.40" y="724" font-size="16.6" fill="#1f2328" textLength="178.50" lengthAdjust="spacing" stroke="#1f2328" stroke-width="0.22">Activity Directives Table</text><text x="1237.70" y="723" font-size="15.6" fill="#b8babc" textLength="160.29" lengthAdjust="spacing">Filter Activity Directives</text><text x="464.20" y="773" font-size="15.2" fill="#1f2328" textLength="14.60" lengthAdjust="spacing" stroke="#1f2328" stroke-width="0.32">ID</text><text x="560.70" y="773" font-size="15.2" fill="#1f2328" textLength="38.96" lengthAdjust="spacing" stroke="#1f2328" stroke-width="0.32">Name</text><text x="800.50" y="773" font-size="15.2" fill="#1f2328" textLength="32.97" lengthAdjust="spacing" stroke="#1f2328" stroke-width="0.32">Type</text><text x="1136.30" y="773" font-size="15.2" fill="#1f2328" textLength="136.52" lengthAdjust="spacing" stroke="#1f2328" stroke-width="0.32">Absolute Start Time</text><text x="1376.20" y="773" font-size="15.2" fill="#1f2328" textLength="79.99" lengthAdjust="spacing" stroke="#1f2328" stroke-width="0.32">Start Offset</text><text x="464.70" y="813" font-size="15.2" fill="#1f2328" textLength="15.54" lengthAdjust="spacing">13</text><text x="560.60" y="813" font-size="15.2" fill="#1f2328" textLength="78.91" lengthAdjust="spacing">CollectData</text><text x="800.50" y="813" font-size="15.2" fill="#1f2328" textLength="78.91" lengthAdjust="spacing">CollectData</text><text x="1136.30" y="813" font-size="15.2" fill="#1f2328" textLength="140.30" lengthAdjust="spacing">2023-342T08:00:00</text><text x="1376.20" y="813" font-size="15.2" fill="#1f2328" textLength="60.96" lengthAdjust="spacing">08:00:00</text><text x="464.70" y="851" font-size="15.2" fill="#1f2328" textLength="15.54" lengthAdjust="spacing">14</text><text x="560.60" y="851" font-size="15.2" fill="#1f2328" textLength="120.40" lengthAdjust="spacing">ChangeMagMode</text><text x="800.50" y="851" font-size="15.2" fill="#1f2328" textLength="120.40" lengthAdjust="spacing">ChangeMagMode</text><text x="1136.30" y="851" font-size="15.2" fill="#1f2328" textLength="140.30" lengthAdjust="spacing">2023-342T04:00:36</text><text x="1376.20" y="851" font-size="15.2" fill="#1f2328" textLength="90.68" lengthAdjust="spacing">04:00:36.272</text><text x="464.70" y="890" font-size="15.2" fill="#1f2328" textLength="15.54" lengthAdjust="spacing">15</text><text x="560.60" y="890" font-size="15.2" fill="#1f2328" textLength="120.40" lengthAdjust="spacing">ChangeMagMode</text><text x="800.50" y="890" font-size="15.2" fill="#1f2328" textLength="120.40" lengthAdjust="spacing">ChangeMagMode</text><text x="1136.30" y="890" font-size="15.2" fill="#1f2328" textLength="140.30" lengthAdjust="spacing">2023-342T16:00:00</text><text x="1376.20" y="890" font-size="15.2" fill="#1f2328" textLength="59.46" lengthAdjust="spacing">16:00:00</text><text x="1668.00" y="90" font-size="16.6" fill="#1f2328" textLength="125.22" lengthAdjust="spacing" stroke="#1f2328" stroke-width="0.22">Selected Activity</text><text x="1666.70" y="136" font-size="15.2" fill="#1f2328" textLength="121.00" lengthAdjust="spacing" font-style="italic" stroke="#1f2328" stroke-width="0.32">ChangeMagMode</text><text x="1687.40" y="185" font-size="15.4" fill="#1f2328" textLength="65.19" lengthAdjust="spacing" stroke="#1f2328" stroke-width="0.32">Definition</text><text x="1704.00" y="224" font-size="15.2" fill="#3f474e">ID</text><text x="1929.20" y="224" font-size="15.2" fill="#a9acb0" textLength="15.54" lengthAdjust="spacing">14</text><text x="1705.40" y="266" font-size="15.2" fill="#3f474e" textLength="87.70" lengthAdjust="spacing">Activity Type</text><text x="1929.20" y="266" font-size="15.2" fill="#a9acb0" textLength="120.40" lengthAdjust="spacing">ChangeMagMode</text><text x="1705.40" y="309" font-size="15.2" fill="#3f474e" textLength="201.97" lengthAdjust="spacing">Start Time - YYYY-DDDThh:...</text><text x="1929.20" y="309" font-size="15.2" fill="#2b2f33" textLength="168.62" lengthAdjust="spacing">2023-342T04:00:36.272</text><text x="1725.80" y="353" font-size="15.4" fill="#1f2328" textLength="48.78" lengthAdjust="spacing" stroke="#1f2328" stroke-width="0.32">Anchor</text><text x="1705.40" y="395" font-size="15.2" fill="#3f474e" textLength="94.60" lengthAdjust="spacing">Creation Time</text><text x="1929.20" y="395" font-size="15.2" fill="#a9acb0" textLength="250.50" lengthAdjust="spacing">2023-12-08T18:50:10.387197+00:00</text><text x="1705.40" y="439" font-size="15.2" fill="#3f474e" textLength="129.97" lengthAdjust="spacing">Last Modified Time</text><text x="1929.20" y="439" font-size="15.2" fill="#a9acb0" textLength="251.20" lengthAdjust="spacing">2023-12-08T18:50:19.587914+00:00</text><text x="1705.40" y="481" font-size="15.2" fill="#3f474e" textLength="112.97" lengthAdjust="spacing">Last Modified By</text><text x="1929.20" y="481" font-size="15.2" fill="#a9acb0" textLength="32.98" lengthAdjust="spacing">aerie</text><text x="1705.40" y="524" font-size="15.2" fill="#3f474e" textLength="179.37" lengthAdjust="spacing">Source Scheduling Goal ID</text><text x="1929.20" y="524" font-size="15.2" fill="#a9acb0" textLength="35.61" lengthAdjust="spacing">None</text><text x="1705.40" y="567" font-size="15.2" fill="#3f474e" textLength="31.54" lengthAdjust="spacing">Tags</text><text x="1931.80" y="567" font-size="15.2" fill="#b8babc" textLength="85.31" lengthAdjust="spacing">Enter a tag...</text><text x="1687.40" y="617" font-size="15.4" fill="#1f2328" textLength="77.88" lengthAdjust="spacing" stroke="#1f2328" stroke-width="0.32">Parameters</text><text x="1713.30" y="651" font-size="16" fill="#3f474e" textLength="42.70" lengthAdjust="spacing">Preset</text><text x="1721.30" y="680" font-size="15.6" fill="#2b2f33" textLength="35.61" lengthAdjust="spacing">None</text><text x="1705.40" y="721" font-size="15.2" fill="#3f474e" textLength="37.52" lengthAdjust="spacing">mode</text><text x="1917.20" y="722" font-size="15.6" fill="#1f2328" textLength="79.99" lengthAdjust="spacing">HIGH_RATE</text><text x="1687.40" y="770" font-size="15.4" fill="#1f2328" textLength="82.63" lengthAdjust="spacing" stroke="#1f2328" stroke-width="0.32">Annotations</text><text x="1705.40" y="798" font-size="15.2" fill="#6b7075" textLength="154.62" lengthAdjust="spacing">No Annotations Found</text><text x="17.50" y="1081" font-size="14.8" fill="#1f2328" textLength="16.32" lengthAdjust="spacing" stroke="#1f2328" stroke-width="0.32">All</text><text x="49.30" y="1081" font-size="14.8" fill="#6b7075">0</text><text x="177.99" y="1081" font-size="14.8" fill="#6b7075">0</text><text x="264.39" y="1081" font-size="14.8" fill="#6b7075">0</text><text x="350.29" y="1081" font-size="14.8" fill="#6b7075">0</text></svg>
</body></html>
